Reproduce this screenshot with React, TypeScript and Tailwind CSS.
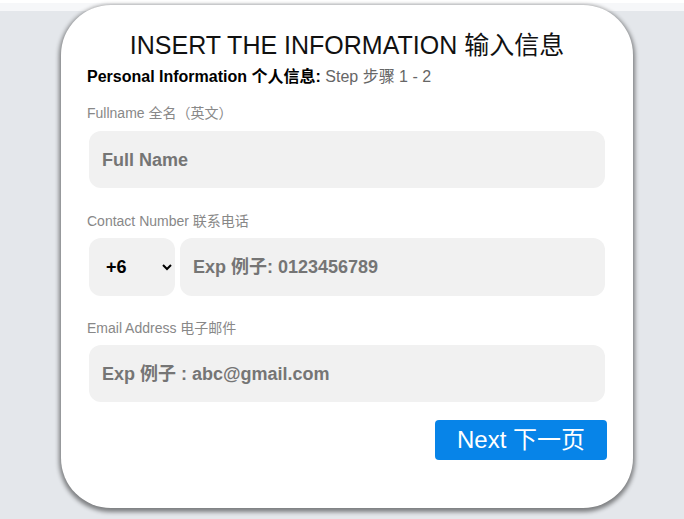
import { useState } from 'react'

const font = { fontFamily: '"Liberation Sans", Arial, "Noto Sans CJK SC", sans-serif' }

export default function App() {
  const [code, setCode] = useState('+6')

  return (
    <div className="min-h-screen bg-[#e4e7eb] pb-[11px]" style={font}>
      <div className="h-[11px] bg-[#f6f7f9] border-t-[3px] border-white" />
      <div className="-mt-[6px] ml-[61px] w-[572px] rounded-[50px] bg-white px-[26px] pt-[26px] pb-[48px] shadow-[0_2px_4px_2px_rgba(0,0,0,0.45)]">
        <h1 className="text-center text-[25px] leading-[28px] text-[#111]">INSERT THE INFORMATION 输入信息</h1>

        <p className="mt-[9px] text-[16px] leading-[18px] text-black">
          <span className="font-bold">Personal Information 个人信息:</span>{' '}
          <span className="text-[#666]">Step 步骤 1 - 2</span>
        </p>

        {/* Fullname */}
        <label className="mt-[19px] block text-[14px] leading-[16px] text-[#888]">Fullname 全名（英文）</label>
        <input
          type="text"
          placeholder="Full Name"
          className="mx-[2px] mt-[10px] block h-[57px] w-[516px] rounded-xl bg-[#f1f1f1] px-[13px] pt-[2px] text-[18px] font-bold outline-none placeholder:text-[#757575]"
        />

        {/* Contact */}
        <label className="mt-[25px] block text-[14px] leading-[16px] text-[#888]">Contact Number 联系电话</label>
        <div className="mx-[2px] mt-[9px] flex gap-[5px]">
          <select
            value={code}
            onChange={(e) => setCode(e.target.value)}
            className="h-[58px] w-[86px] rounded-xl bg-[#f1f1f1] pl-[13px] pr-[6px] text-[18px] font-bold text-black outline-none"
          >
            <option value="+6">+6</option>
            <option value="+60">+60</option>
            <option value="+65">+65</option>
          </select>
          <input
            type="tel"
            placeholder="Exp 例子: 0123456789"
            className="h-[58px] flex-1 rounded-xl bg-[#f1f1f1] px-[13px] pt-[1px] text-[18px] font-bold outline-none placeholder:text-[#757575]"
          />
        </div>

        {/* Email */}
        <label className="mt-[24px] block text-[14px] leading-[16px] text-[#888]">Email Address 电子邮件</label>
        <input
          type="email"
          placeholder="Exp 例子 : abc@gmail.com"
          className="mx-[2px] mt-[9px] block h-[57px] w-[516px] rounded-xl bg-[#f1f1f1] px-[13px] pt-[2px] text-[18px] font-bold outline-none placeholder:text-[#757575]"
        />

        <div className="mt-[18px] flex justify-end">
          <button className="h-[40px] rounded bg-[#0784e8] px-[22px] text-[24px] leading-none text-white">
            Next 下一页
          </button>
        </div>
      </div>
    </div>
  )
}
